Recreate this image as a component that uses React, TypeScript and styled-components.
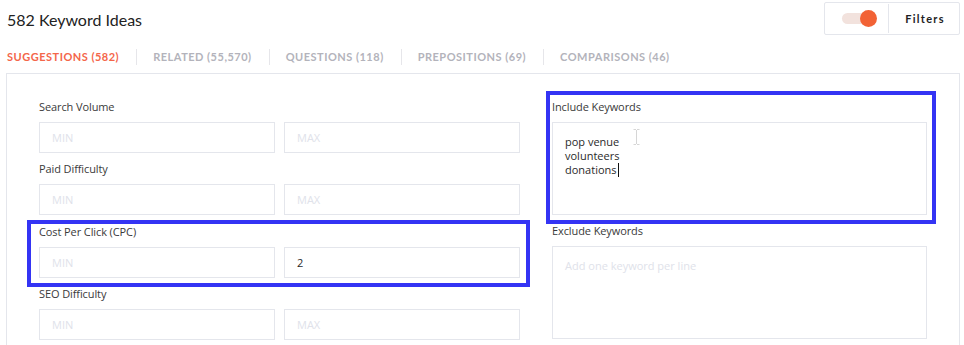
import React from "react";
import styled, { createGlobalStyle } from "styled-components";

const Global = createGlobalStyle`
  html, body { margin: 0; padding: 0; background: #ffffff; }
  body { overflow: hidden; font-family: "Open Sans", "Noto Sans", sans-serif; }
  * { box-sizing: border-box; }
`;

const Page = styled.div`
  width: 964px;
  padding: 2px 4px 0 6px;
`;

const Header = styled.div`
  display: flex;
  justify-content: space-between;
  align-items: flex-start;
`;

const Title = styled.h1`
  margin: 7px 0 0 1px;
  font-family: "Lato", sans-serif;
  font-weight: 400;
  font-size: 16px;
  line-height: 22px;
  color: #222;
`;

const FilterButton = styled.div`
  display: flex;
  align-items: center;
  width: 136px;
  height: 33px;
  border: 1px solid #e4e6ec;
  border-radius: 2px;
  background: #fff;
`;

const ToggleCell = styled.div`
  width: 64px;
  height: 29px;
  display: flex;
  align-items: center;
  justify-content: center;
  border-right: 1px solid #e4e6ec;
`;

const Track = styled.div`
  position: relative;
  width: 34px;
  height: 11px;
  border-radius: 6px;
  background: #f2e2dd;
  margin-left: 4px;
`;

const Knob = styled.div`
  position: absolute;
  right: -1px;
  top: -3px;
  width: 17px;
  height: 17px;
  border-radius: 50%;
  background: #f26235;
`;

const FilterLabel = styled.div`
  flex: 1;
  text-align: center;
  font-family: "Lato", sans-serif;
  font-weight: 700;
  font-size: 11px;
  letter-spacing: 1.3px;
  color: #1e1e24;
  padding-left: 2px;
`;

const Tabs = styled.div`
  display: flex;
  align-items: center;
  margin-top: 14px;
  margin-left: 1px;
`;

const Tab = styled.div<{ $active?: boolean; $first?: boolean }>`
  font-family: "Lato", sans-serif;
  font-weight: 700;
  font-size: 11px;
  letter-spacing: 0.5px;
  line-height: 16px;
  text-transform: uppercase;
  color: ${(p) => (p.$active ? "#f4664a" : "#b3b3bb")};
  padding: 0 17px 0 ${(p) => (p.$first ? "0" : "16px")};
  border-left: ${(p) => (p.$first ? "none" : "1px solid #e6e6ea")};
`;

const Panel = styled.div`
  margin-top: 8px;
  width: 954px;
  border: 1px solid #e4e6ec;
  padding: 25px 32px 24px 32px;
  display: grid;
  grid-template-columns: 481px 375px;
  column-gap: 32px;
  align-items: start;
`;

const Column = styled.div`
  display: flex;
  flex-direction: column;
  gap: 8.4px;
`;

const Field = styled.div<{ $highlight?: string }>`
  position: relative;
  display: flex;
  flex-direction: column;
  &::after {
    content: "";
    display: ${(p) => (p.$highlight ? "block" : "none")};
    position: absolute;
    inset: ${(p) => p.$highlight || "0"};
    border: 4px solid #3434f4;
    pointer-events: none;
  }
`;

const Label = styled.div`
  font-size: 11px;
  line-height: 16px;
  color: #3a3a3a;
  margin-bottom: 7px;
  letter-spacing: -0.1px;
`;

const Pair = styled.div`
  display: grid;
  grid-template-columns: 1fr 1fr;
  column-gap: 9px;
`;

const Input = styled.div<{ $filled?: boolean }>`
  height: 31px;
  border: 1px solid #e4e6ec;
  padding: 0 12px;
  display: flex;
  align-items: center;
  font-size: 11px;
  color: ${(p) => (p.$filled ? "#2a2a2a" : "#e0e2ea")};
`;

const Area = styled.div<{ $placeholder?: boolean }>`
  position: relative;
  height: 93px;
  border: 1px solid #e4e6ec;
  padding: 12px 12px;
  font-size: 11px;
  line-height: 14px;
  color: ${(p) => (p.$placeholder ? "#e0e2ea" : "#2a2a2a")};
  white-space: pre-line;
`;

const Caret = styled.span`
  display: inline-block;
  width: 1px;
  height: 14px;
  background: #111;
  vertical-align: -3px;
  margin-left: 1px;
`;

const IBeam = styled.svg`
  position: absolute;
  left: 80px;
  top: 6px;
`;

const Range = ({ label, max, highlight }: { label: string; max?: string; highlight?: string }) => (
  <Field $highlight={highlight}>
    <Label>{label}</Label>
    <Pair>
      <Input>MIN</Input>
      <Input $filled={!!max}>{max ?? "MAX"}</Input>
    </Pair>
  </Field>
);

export default function App() {
  const tabs = [
    "Suggestions (582)",
    "Related (55,570)",
    "Questions (118)",
    "Prepositions (69)",
    "Comparisons (46)",
  ];
  return (
    <>
      <Global />
      <Page>
        <Header>
          <Title>582 Keyword Ideas</Title>
          <FilterButton>
            <ToggleCell>
              <Track>
                <Knob />
              </Track>
            </ToggleCell>
            <FilterLabel>Filters</FilterLabel>
          </FilterButton>
        </Header>
        <Tabs>
          {tabs.map((t, i) => (
            <Tab key={t} $active={i === 0} $first={i === 0}>
              {t}
            </Tab>
          ))}
        </Tabs>
        <Panel>
          <Column>
            <Range label="Search Volume" />
            <Range label="Paid Difficulty" />
            <Range label="Cost Per Click (CPC)" max="2" highlight="-4px -10px -9px -12px" />
            <Range label="SEO Difficulty" />
          </Column>
          <Column>
            <Field $highlight="-8px -9px -9px -6px">
              <Label>Include Keywords</Label>
              <Area>
                {"pop venue\nvolunteers\ndonations"}
                <Caret />
                <IBeam width="7" height="16" viewBox="0 0 7 16">
                  <path d="M0.5 0.5h2.5M4 0.5h2.5M3.5 1v14M0.5 15.5h2.5M4 15.5h2.5" stroke="#d6d6d6" strokeWidth="1" fill="none" />
                </IBeam>
              </Area>
            </Field>
            <Field>
              <Label>Exclude Keywords</Label>
              <Area $placeholder>Add one keyword per line</Area>
            </Field>
          </Column>
        </Panel>
      </Page>
    </>
  );
}
